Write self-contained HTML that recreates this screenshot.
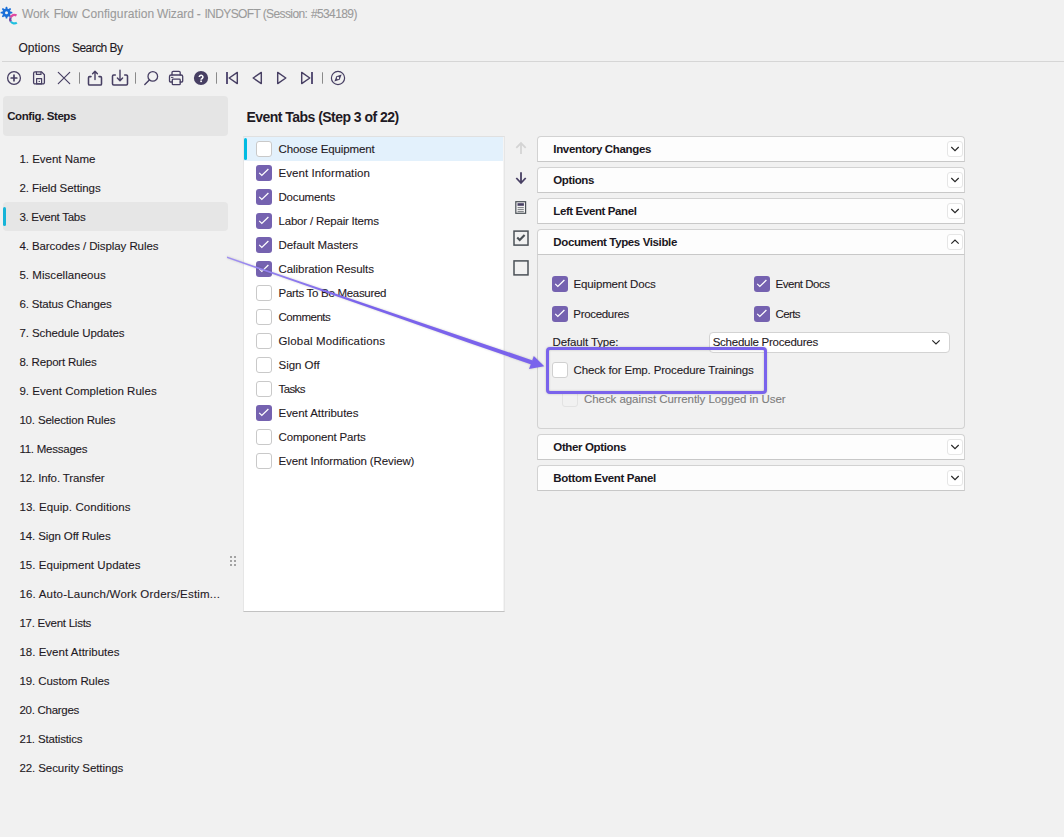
<!DOCTYPE html>
<html><head><meta charset="utf-8"><style>
html,body{margin:0;padding:0;}
body{width:1064px;height:837px;overflow:hidden;background:#f1f1f1;position:relative;font-family:"Liberation Sans", sans-serif;}
.t{position:absolute;white-space:nowrap;}
</style></head><body>
<svg style="position:absolute;left:0;top:5px" width="20" height="20" viewBox="0 0 20 20">
<g fill="#1a6fd8">
<circle cx="6.5" cy="7.7" r="4.2"/>
<rect x="5.6" y="1.8" width="1.8" height="11.8" rx="0.6"/>
<rect x="0.6" y="6.8" width="11.8" height="1.8" rx="0.6"/>
<rect x="5.6" y="1.8" width="1.8" height="11.8" rx="0.6" transform="rotate(45 6.5 7.7)"/>
<rect x="5.6" y="1.8" width="1.8" height="11.8" rx="0.6" transform="rotate(-45 6.5 7.7)"/>
</g>
<circle cx="6.5" cy="7.7" r="1.5" fill="#f1f1f1"/>
<path d="M16.5 10.5 A4 4 0 0 0 10.6 12.5" stroke="#e04aa0" stroke-width="2.3" fill="none"/>
<path d="M10.6 12.5 A4 4 0 0 0 10.9 16.5" stroke="#6a4aa8" stroke-width="2.3" fill="none"/>
<path d="M10.9 16.5 A4 4 0 0 0 16.8 17.6" stroke="#1fc0e0" stroke-width="2.3" fill="none"/>
</svg>
<div class="t" style="left:22.00px;top:5.84px;font-size:12px;line-height:16px;-webkit-text-stroke:0.1px currentColor;color:#9b9b9b;letter-spacing:-0.193px;">Work</div>
<div class="t" style="left:53.80px;top:5.84px;font-size:12px;line-height:16px;-webkit-text-stroke:0.1px currentColor;color:#9b9b9b;letter-spacing:-0.457px;">Flow</div>
<div class="t" style="left:81.70px;top:5.84px;font-size:12px;line-height:16px;-webkit-text-stroke:0.1px currentColor;color:#9b9b9b;letter-spacing:0.083px;">Configuration</div>
<div class="t" style="left:157.00px;top:5.84px;font-size:12px;line-height:16px;-webkit-text-stroke:0.1px currentColor;color:#9b9b9b;letter-spacing:-0.092px;">Wizard</div>
<div class="t" style="left:196.80px;top:5.84px;font-size:12px;line-height:16px;-webkit-text-stroke:0.1px currentColor;color:#9b9b9b;letter-spacing:-0.300px;">-</div>
<div class="t" style="left:204.40px;top:5.84px;font-size:12px;line-height:16px;-webkit-text-stroke:0.1px currentColor;color:#9b9b9b;letter-spacing:-0.600px;">INDYSOFT</div>
<div class="t" style="left:262.70px;top:5.84px;font-size:12px;line-height:16px;-webkit-text-stroke:0.1px currentColor;color:#9b9b9b;letter-spacing:-0.600px;">(Session:</div>
<div class="t" style="left:310.90px;top:5.84px;font-size:12px;line-height:16px;-webkit-text-stroke:0.1px currentColor;color:#9b9b9b;letter-spacing:-0.600px;">#534189)</div>
<div class="t" style="left:18.40px;top:39.54px;font-size:12px;line-height:16px;-webkit-text-stroke:0.1px currentColor;color:#1f1a24;letter-spacing:0.024px;">Options</div>
<div class="t" style="left:72.00px;top:39.54px;font-size:12px;line-height:16px;-webkit-text-stroke:0.1px currentColor;color:#1f1a24;letter-spacing:-0.545px;">Search By</div>
<div style="position:absolute;left:2px;top:61px;width:1062px;height:1px;background:#d6d6d6"></div>
<svg style="position:absolute;left:0;top:64px" width="360" height="28" viewBox="0 64 360 28" fill="none" stroke="#473f63" stroke-width="1.3" stroke-linecap="round" stroke-linejoin="round">
<circle cx="14" cy="78" r="6.4"/>
<path d="M14 75.2V80.8M11.2 78H16.8" stroke-width="1.7"/>
<path d="M35 71.9H41.6L44.4 74.7V82.6A1.3 1.3 0 0 1 43.1 83.9H34.9A1.3 1.3 0 0 1 33.6 82.6V73.3A1.4 1.4 0 0 1 35 71.9Z"/>
<path d="M36.4 72V74.4H41V72" stroke-width="1.2"/>
<rect x="36.6" y="78.6" width="5" height="5.3" stroke-width="1.2"/>
<path d="M39 81.4H39.6" stroke-width="1"/>
<path d="M58.3 72.4L69.7 83.6M69.7 72.4L58.3 83.6" stroke-width="1.2"/>
<path d="M79.5 72.3V83.7M135.5 72.3V83.7M216.5 72.3V83.7M322.5 72.3V83.7" stroke="#8a8a8a" stroke-width="1" stroke-linecap="butt"/>
<path d="M91 76.6H89.6A1.1 1.1 0 0 0 88.5 77.7V83.9A1.1 1.1 0 0 0 89.6 85H100.4A1.1 1.1 0 0 0 101.5 83.9V77.7A1.1 1.1 0 0 0 100.4 76.6H99" stroke-width="1.55"/>
<path d="M95 79.6V71.5M92.6 73.8L95 71.2L97.4 73.8" stroke-width="1.4"/>
<path d="M115.3 75H113.7A1.2 1.2 0 0 0 112.5 76.2V83.8A1.2 1.2 0 0 0 113.7 85H126.3A1.2 1.2 0 0 0 127.5 83.8V76.2A1.2 1.2 0 0 0 126.3 75H124.7" stroke-width="1.55"/>
<path d="M120 70.3V80.6M117.4 78L120 80.7L122.6 78" stroke-width="1.4"/>
<circle cx="152.8" cy="76.4" r="4.8"/>
<path d="M149.3 79.9L144.8 84.4" stroke-width="1.4"/>
<path d="M172 75V72.6A1.2 1.2 0 0 1 173.2 71.4H179A1.2 1.2 0 0 1 180.2 72.6V75"/>
<path d="M172 82H170.4A0.9 0.9 0 0 1 169.5 81.1V76.6A1.6 1.6 0 0 1 171.1 75H181.1A1.6 1.6 0 0 1 182.7 76.6V81.1A0.9 0.9 0 0 1 181.8 82H180.2"/>
<rect x="172.3" y="79.2" width="7.9" height="5.5" rx="0.8"/>
<path d="M171.4 77.4H173" stroke-width="1"/>
<path d="M227 72V84" stroke-width="2" stroke-linecap="butt" stroke="#5a5278"/>
<path d="M237.3 72.4V83.6L229.2 78Z" stroke-width="1.45"/>
<path d="M261.3 72.4V83.6L253.2 78Z" stroke-width="1.45"/>
<path d="M277.7 72.4V83.6L285.8 78Z" stroke-width="1.45"/>
<path d="M301.7 72.4V83.6L309.8 78Z" stroke-width="1.45"/>
<path d="M312 72V84" stroke-width="2" stroke-linecap="butt" stroke="#5a5278"/>
<circle cx="338" cy="78" r="6.6" stroke-width="1.2"/>
</svg>
<svg style="position:absolute;left:193px;top:70px" width="16" height="16" viewBox="0 0 16 16">
<circle cx="8" cy="8" r="7.1" fill="#473f63"/>
<path d="M6.3 7.1A1.8 1.8 0 1 1 9.4 8.3C8.6 8.8 8.1 9 8.1 9.8" stroke="#fff" stroke-width="1.6" fill="none" stroke-linecap="butt"/>
<rect x="7.25" y="10.5" width="1.7" height="1.6" fill="#fff"/>
</svg>
<svg style="position:absolute;left:330px;top:70px" width="16" height="16" viewBox="0 0 16 16">
<path d="M11.6 4.4L9.7 9.7L4.4 11.6L6.3 6.3Z" fill="#473f63"/>
<circle cx="8" cy="8" r="1.2" fill="#f1f1f1"/>
</svg>
<div style="position:absolute;left:3px;top:96px;width:225px;height:40px;background:#e5e5e5;border-radius:4px"></div>
<div class="t" style="left:7.20px;top:108.32px;font-size:11.5px;line-height:16px;font-weight:bold;color:#1f1a24;letter-spacing:-0.410px;">Config. Steps</div>
<div style="position:absolute;left:3px;top:202px;width:225px;height:29px;background:#e6e6e6;border-radius:4px"></div>
<div style="position:absolute;left:3px;top:207px;width:3px;height:19px;background:#17b4d8;border-radius:2px"></div>
<div class="t" style="left:19.40px;top:151.02px;font-size:11.5px;line-height:16px;-webkit-text-stroke:0.1px currentColor;color:#1f1a24;letter-spacing:-0.006px;">1. Event Name</div>
<div class="t" style="left:19.40px;top:180.02px;font-size:11.5px;line-height:16px;-webkit-text-stroke:0.1px currentColor;color:#1f1a24;letter-spacing:-0.076px;">2. Field Settings</div>
<div class="t" style="left:19.40px;top:209.02px;font-size:11.5px;line-height:16px;-webkit-text-stroke:0.1px currentColor;color:#1f1a24;letter-spacing:-0.269px;">3. Event Tabs</div>
<div class="t" style="left:19.40px;top:238.02px;font-size:11.5px;line-height:16px;-webkit-text-stroke:0.1px currentColor;color:#1f1a24;letter-spacing:-0.085px;">4. Barcodes / Display Rules</div>
<div class="t" style="left:19.40px;top:267.02px;font-size:11.5px;line-height:16px;-webkit-text-stroke:0.1px currentColor;color:#1f1a24;letter-spacing:0.046px;">5. Miscellaneous</div>
<div class="t" style="left:19.40px;top:296.02px;font-size:11.5px;line-height:16px;-webkit-text-stroke:0.1px currentColor;color:#1f1a24;letter-spacing:-0.148px;">6. Status Changes</div>
<div class="t" style="left:19.40px;top:325.02px;font-size:11.5px;line-height:16px;-webkit-text-stroke:0.1px currentColor;color:#1f1a24;letter-spacing:-0.090px;">7. Schedule Updates</div>
<div class="t" style="left:19.40px;top:354.02px;font-size:11.5px;line-height:16px;-webkit-text-stroke:0.1px currentColor;color:#1f1a24;letter-spacing:-0.189px;">8. Report Rules</div>
<div class="t" style="left:19.40px;top:383.02px;font-size:11.5px;line-height:16px;-webkit-text-stroke:0.1px currentColor;color:#1f1a24;letter-spacing:0.046px;">9. Event Completion Rules</div>
<div class="t" style="left:19.40px;top:412.02px;font-size:11.5px;line-height:16px;-webkit-text-stroke:0.1px currentColor;color:#1f1a24;letter-spacing:-0.169px;">10. Selection Rules</div>
<div class="t" style="left:19.40px;top:441.02px;font-size:11.5px;line-height:16px;-webkit-text-stroke:0.1px currentColor;color:#1f1a24;letter-spacing:-0.245px;">11. Messages</div>
<div class="t" style="left:19.40px;top:470.02px;font-size:11.5px;line-height:16px;-webkit-text-stroke:0.1px currentColor;color:#1f1a24;letter-spacing:-0.107px;">12. Info. Transfer</div>
<div class="t" style="left:19.40px;top:499.02px;font-size:11.5px;line-height:16px;-webkit-text-stroke:0.1px currentColor;color:#1f1a24;letter-spacing:0.091px;">13. Equip. Conditions</div>
<div class="t" style="left:19.40px;top:528.02px;font-size:11.5px;line-height:16px;-webkit-text-stroke:0.1px currentColor;color:#1f1a24;letter-spacing:-0.110px;">14. Sign Off Rules</div>
<div class="t" style="left:19.40px;top:557.02px;font-size:11.5px;line-height:16px;-webkit-text-stroke:0.1px currentColor;color:#1f1a24;letter-spacing:0.043px;">15. Equipment Updates</div>
<div class="t" style="left:19.40px;top:586.02px;font-size:11.5px;line-height:16px;-webkit-text-stroke:0.1px currentColor;color:#1f1a24;letter-spacing:0.200px;">16. Auto-Launch/Work Orders/Estim...</div>
<div class="t" style="left:19.40px;top:615.02px;font-size:11.5px;line-height:16px;-webkit-text-stroke:0.1px currentColor;color:#1f1a24;letter-spacing:-0.249px;">17. Event Lists</div>
<div class="t" style="left:19.40px;top:644.02px;font-size:11.5px;line-height:16px;-webkit-text-stroke:0.1px currentColor;color:#1f1a24;letter-spacing:0.020px;">18. Event Attributes</div>
<div class="t" style="left:19.40px;top:673.02px;font-size:11.5px;line-height:16px;-webkit-text-stroke:0.1px currentColor;color:#1f1a24;letter-spacing:-0.090px;">19. Custom Rules</div>
<div class="t" style="left:19.40px;top:702.02px;font-size:11.5px;line-height:16px;-webkit-text-stroke:0.1px currentColor;color:#1f1a24;letter-spacing:-0.270px;">20. Charges</div>
<div class="t" style="left:19.40px;top:731.02px;font-size:11.5px;line-height:16px;-webkit-text-stroke:0.1px currentColor;color:#1f1a24;letter-spacing:-0.157px;">21. Statistics</div>
<div class="t" style="left:19.40px;top:760.02px;font-size:11.5px;line-height:16px;-webkit-text-stroke:0.1px currentColor;color:#1f1a24;letter-spacing:-0.076px;">22. Security Settings</div>
<div style="position:absolute;left:230px;top:556px;width:2px;height:2px;background:#a3a3a3"></div>
<div style="position:absolute;left:230px;top:560px;width:2px;height:2px;background:#a3a3a3"></div>
<div style="position:absolute;left:230px;top:564px;width:2px;height:2px;background:#a3a3a3"></div>
<div style="position:absolute;left:234px;top:556px;width:2px;height:2px;background:#a3a3a3"></div>
<div style="position:absolute;left:234px;top:560px;width:2px;height:2px;background:#a3a3a3"></div>
<div style="position:absolute;left:234px;top:564px;width:2px;height:2px;background:#a3a3a3"></div>
<div class="t" style="left:246.50px;top:108.15px;font-size:14px;line-height:18px;font-weight:bold;color:#1f1a24;letter-spacing:-0.537px;">Event Tabs (Step 3 of 22)</div>
<div style="position:absolute;left:243px;top:136px;width:260px;height:474px;background:#fff;border:1px solid #e6e6e6;border-bottom-color:#c2c2c2;border-top-color:#e0e0e0;box-shadow:inset -1px 0 0 #f4f4f4"></div>
<div style="position:absolute;left:244px;top:137px;width:259px;height:24px;background:#e3f1fc"></div>
<div style="position:absolute;left:244px;top:138px;width:3px;height:22px;background:#00bbe2;border-radius:1.5px"></div>
<div style="position:absolute;left:256px;top:141px;width:14px;height:14px;border:1px solid #c9c9c9;border-radius:3px;background:#fff"></div>
<div class="t" style="left:278.50px;top:141.02px;font-size:11.5px;line-height:16px;-webkit-text-stroke:0.1px currentColor;color:#1f1a24;letter-spacing:-0.101px;">Choose Equipment</div>
<svg style="position:absolute;left:256px;top:165px" width="16" height="16" viewBox="0 0 16 16"><rect x="0" y="0" width="16" height="16" rx="3" fill="#7562b0"/><path d="M3.2 7.9L5.8 10.4L12.4 4" stroke="#fff" stroke-width="1.25" fill="none"/></svg>
<div class="t" style="left:278.50px;top:165.02px;font-size:11.5px;line-height:16px;-webkit-text-stroke:0.1px currentColor;color:#1f1a24;letter-spacing:0.079px;">Event Information</div>
<svg style="position:absolute;left:256px;top:189px" width="16" height="16" viewBox="0 0 16 16"><rect x="0" y="0" width="16" height="16" rx="3" fill="#7562b0"/><path d="M3.2 7.9L5.8 10.4L12.4 4" stroke="#fff" stroke-width="1.25" fill="none"/></svg>
<div class="t" style="left:278.50px;top:189.02px;font-size:11.5px;line-height:16px;-webkit-text-stroke:0.1px currentColor;color:#1f1a24;letter-spacing:-0.189px;">Documents</div>
<svg style="position:absolute;left:256px;top:213px" width="16" height="16" viewBox="0 0 16 16"><rect x="0" y="0" width="16" height="16" rx="3" fill="#7562b0"/><path d="M3.2 7.9L5.8 10.4L12.4 4" stroke="#fff" stroke-width="1.25" fill="none"/></svg>
<div class="t" style="left:278.50px;top:213.02px;font-size:11.5px;line-height:16px;-webkit-text-stroke:0.1px currentColor;color:#1f1a24;letter-spacing:-0.197px;">Labor / Repair Items</div>
<svg style="position:absolute;left:256px;top:237px" width="16" height="16" viewBox="0 0 16 16"><rect x="0" y="0" width="16" height="16" rx="3" fill="#7562b0"/><path d="M3.2 7.9L5.8 10.4L12.4 4" stroke="#fff" stroke-width="1.25" fill="none"/></svg>
<div class="t" style="left:278.50px;top:237.02px;font-size:11.5px;line-height:16px;-webkit-text-stroke:0.1px currentColor;color:#1f1a24;letter-spacing:-0.070px;">Default Masters</div>
<svg style="position:absolute;left:256px;top:261px" width="16" height="16" viewBox="0 0 16 16"><rect x="0" y="0" width="16" height="16" rx="3" fill="#7562b0"/><path d="M3.2 7.9L5.8 10.4L12.4 4" stroke="#fff" stroke-width="1.25" fill="none"/></svg>
<div class="t" style="left:278.50px;top:261.02px;font-size:11.5px;line-height:16px;-webkit-text-stroke:0.1px currentColor;color:#1f1a24;letter-spacing:-0.059px;">Calibration Results</div>
<div style="position:absolute;left:256px;top:285px;width:14px;height:14px;border:1px solid #c9c9c9;border-radius:3px;background:#fff"></div>
<div class="t" style="left:278.50px;top:285.02px;font-size:11.5px;line-height:16px;-webkit-text-stroke:0.1px currentColor;color:#1f1a24;letter-spacing:-0.294px;">Parts To Be Measured</div>
<div style="position:absolute;left:256px;top:309px;width:14px;height:14px;border:1px solid #c9c9c9;border-radius:3px;background:#fff"></div>
<div class="t" style="left:278.50px;top:309.02px;font-size:11.5px;line-height:16px;-webkit-text-stroke:0.1px currentColor;color:#1f1a24;letter-spacing:-0.464px;">Comments</div>
<div style="position:absolute;left:256px;top:333px;width:14px;height:14px;border:1px solid #c9c9c9;border-radius:3px;background:#fff"></div>
<div class="t" style="left:278.50px;top:333.02px;font-size:11.5px;line-height:16px;-webkit-text-stroke:0.1px currentColor;color:#1f1a24;letter-spacing:0.158px;">Global Modifications</div>
<div style="position:absolute;left:256px;top:357px;width:14px;height:14px;border:1px solid #c9c9c9;border-radius:3px;background:#fff"></div>
<div class="t" style="left:278.50px;top:357.02px;font-size:11.5px;line-height:16px;-webkit-text-stroke:0.1px currentColor;color:#1f1a24;letter-spacing:-0.035px;">Sign Off</div>
<div style="position:absolute;left:256px;top:381px;width:14px;height:14px;border:1px solid #c9c9c9;border-radius:3px;background:#fff"></div>
<div class="t" style="left:278.50px;top:381.02px;font-size:11.5px;line-height:16px;-webkit-text-stroke:0.1px currentColor;color:#1f1a24;letter-spacing:-0.600px;">Tasks</div>
<svg style="position:absolute;left:256px;top:405px" width="16" height="16" viewBox="0 0 16 16"><rect x="0" y="0" width="16" height="16" rx="3" fill="#7562b0"/><path d="M3.2 7.9L5.8 10.4L12.4 4" stroke="#fff" stroke-width="1.25" fill="none"/></svg>
<div class="t" style="left:278.50px;top:405.02px;font-size:11.5px;line-height:16px;-webkit-text-stroke:0.1px currentColor;color:#1f1a24;letter-spacing:-0.042px;">Event Attributes</div>
<div style="position:absolute;left:256px;top:429px;width:14px;height:14px;border:1px solid #c9c9c9;border-radius:3px;background:#fff"></div>
<div class="t" style="left:278.50px;top:429.02px;font-size:11.5px;line-height:16px;-webkit-text-stroke:0.1px currentColor;color:#1f1a24;letter-spacing:-0.160px;">Component Parts</div>
<div style="position:absolute;left:256px;top:453px;width:14px;height:14px;border:1px solid #c9c9c9;border-radius:3px;background:#fff"></div>
<div class="t" style="left:278.50px;top:453.02px;font-size:11.5px;line-height:16px;-webkit-text-stroke:0.1px currentColor;color:#1f1a24;letter-spacing:-0.110px;">Event Information (Review)</div>
<svg style="position:absolute;left:510px;top:138px" width="24" height="142" viewBox="510 138 24 142" fill="none" stroke-linecap="butt">
<path d="M521 154V143M516.3 147.8L521 143L525.7 147.8" stroke="#d4d4d4" stroke-width="1.8"/>
<path d="M521 172.3V183M516.3 178L521 183L525.7 178" stroke="#473f63" stroke-width="1.8"/>
<rect x="515.8" y="201.7" width="9.8" height="11.6" stroke="#4b5157" stroke-width="1.2"/>
<rect x="517.5" y="203.2" width="6.4" height="2.6" fill="#473f63"/>
<path d="M517.6 207.6H523.8M517.6 209.6H523.8M517.6 211.6H523.8" stroke="#6c7074" stroke-width="0.9"/>
<rect x="514" y="231.1" width="14" height="14" stroke="#4b5157" stroke-width="1.5"/>
<path d="M517.2 237.6L519.7 240.1L524.6 235" stroke="#4b5157" stroke-width="2.1"/>
<rect x="514" y="260.9" width="14" height="14" stroke="#4b5157" stroke-width="1.5"/>
</svg>
<div style="position:absolute;left:537px;top:136px;width:426px;height:24px;background:#fdfdfd;border:1px solid #d2d2d2;border-bottom-color:#c8c8c8;border-radius:4px 4px 0 0"></div>
<div class="t" style="left:553.30px;top:140.82px;font-size:11.5px;line-height:16px;font-weight:bold;color:#1b1722;letter-spacing:-0.339px;">Inventory Changes</div>
<div style="position:absolute;left:947px;top:141px;width:14px;height:14px;border:1px solid #e6e6e6;border-radius:3px;background:#fff"></div>
<svg style="position:absolute;left:945px;top:136px" width="20" height="25" viewBox="945 136 20 25"><path d="M951.3 147L955 150.7L958.7 147" stroke="#262626" stroke-width="1.15" fill="none"/></svg>
<div style="position:absolute;left:537px;top:167px;width:426px;height:24px;background:#fdfdfd;border:1px solid #d2d2d2;border-bottom-color:#c8c8c8;border-radius:4px 4px 0 0"></div>
<div class="t" style="left:553.30px;top:171.82px;font-size:11.5px;line-height:16px;font-weight:bold;color:#1b1722;letter-spacing:-0.407px;">Options</div>
<div style="position:absolute;left:947px;top:172px;width:14px;height:14px;border:1px solid #e6e6e6;border-radius:3px;background:#fff"></div>
<svg style="position:absolute;left:945px;top:167px" width="20" height="25" viewBox="945 167 20 25"><path d="M951.3 178L955 181.7L958.7 178" stroke="#262626" stroke-width="1.15" fill="none"/></svg>
<div style="position:absolute;left:537px;top:198px;width:426px;height:24px;background:#fdfdfd;border:1px solid #d2d2d2;border-bottom-color:#c8c8c8;border-radius:4px 4px 0 0"></div>
<div class="t" style="left:553.30px;top:202.82px;font-size:11.5px;line-height:16px;font-weight:bold;color:#1b1722;letter-spacing:-0.391px;">Left Event Panel</div>
<div style="position:absolute;left:947px;top:203px;width:14px;height:14px;border:1px solid #e6e6e6;border-radius:3px;background:#fff"></div>
<svg style="position:absolute;left:945px;top:198px" width="20" height="25" viewBox="945 198 20 25"><path d="M951.3 209L955 212.7L958.7 209" stroke="#262626" stroke-width="1.15" fill="none"/></svg>
<div style="position:absolute;left:537px;top:255px;width:426px;height:173px;background:#f1f1f1;border:1px solid #d2d2d2;border-top:none;border-radius:0 0 4px 4px"></div>
<div style="position:absolute;left:537px;top:229px;width:426px;height:24px;background:#fdfdfd;border:1px solid #d2d2d2;border-bottom-color:#c8c8c8;border-radius:4px 4px 0 0"></div>
<div class="t" style="left:553.30px;top:233.82px;font-size:11.5px;line-height:16px;font-weight:bold;color:#1b1722;letter-spacing:-0.375px;">Document Types Visible</div>
<div style="position:absolute;left:947px;top:234px;width:14px;height:14px;border:1px solid #e6e6e6;border-radius:3px;background:#fff"></div>
<svg style="position:absolute;left:945px;top:229px" width="20" height="25" viewBox="945 229 20 25"><path d="M951.3 243.7L955 240L958.7 243.7" stroke="#262626" stroke-width="1.15" fill="none"/></svg>
<div style="position:absolute;left:537px;top:434px;width:426px;height:24px;background:#fdfdfd;border:1px solid #d2d2d2;border-bottom-color:#c8c8c8;border-radius:4px 4px 0 0"></div>
<div class="t" style="left:553.30px;top:438.82px;font-size:11.5px;line-height:16px;font-weight:bold;color:#1b1722;letter-spacing:-0.359px;">Other Options</div>
<div style="position:absolute;left:947px;top:439px;width:14px;height:14px;border:1px solid #e6e6e6;border-radius:3px;background:#fff"></div>
<svg style="position:absolute;left:945px;top:434px" width="20" height="25" viewBox="945 434 20 25"><path d="M951.3 445L955 448.7L958.7 445" stroke="#262626" stroke-width="1.15" fill="none"/></svg>
<div style="position:absolute;left:537px;top:465px;width:426px;height:24px;background:#fdfdfd;border:1px solid #d2d2d2;border-bottom-color:#c8c8c8;border-radius:4px 4px 0 0"></div>
<div class="t" style="left:553.30px;top:469.82px;font-size:11.5px;line-height:16px;font-weight:bold;color:#1b1722;letter-spacing:-0.337px;">Bottom Event Panel</div>
<div style="position:absolute;left:947px;top:470px;width:14px;height:14px;border:1px solid #e6e6e6;border-radius:3px;background:#fff"></div>
<svg style="position:absolute;left:945px;top:465px" width="20" height="25" viewBox="945 465 20 25"><path d="M951.3 476L955 479.7L958.7 476" stroke="#262626" stroke-width="1.15" fill="none"/></svg>
<svg style="position:absolute;left:552px;top:276px" width="16" height="16" viewBox="0 0 16 16"><rect x="0" y="0" width="16" height="16" rx="3" fill="#7562b0"/><path d="M3.2 7.9L5.8 10.4L12.4 4" stroke="#fff" stroke-width="1.25" fill="none"/></svg>
<div class="t" style="left:573.60px;top:276.02px;font-size:11.5px;line-height:16px;-webkit-text-stroke:0.1px currentColor;color:#1f1a24;letter-spacing:-0.171px;">Equipment Docs</div>
<svg style="position:absolute;left:754px;top:276px" width="16" height="16" viewBox="0 0 16 16"><rect x="0" y="0" width="16" height="16" rx="3" fill="#7562b0"/><path d="M3.2 7.9L5.8 10.4L12.4 4" stroke="#fff" stroke-width="1.25" fill="none"/></svg>
<div class="t" style="left:775.50px;top:276.02px;font-size:11.5px;line-height:16px;-webkit-text-stroke:0.1px currentColor;color:#1f1a24;letter-spacing:-0.473px;">Event Docs</div>
<svg style="position:absolute;left:552px;top:306px" width="16" height="16" viewBox="0 0 16 16"><rect x="0" y="0" width="16" height="16" rx="3" fill="#7562b0"/><path d="M3.2 7.9L5.8 10.4L12.4 4" stroke="#fff" stroke-width="1.25" fill="none"/></svg>
<div class="t" style="left:573.30px;top:306.02px;font-size:11.5px;line-height:16px;-webkit-text-stroke:0.1px currentColor;color:#1f1a24;letter-spacing:-0.318px;">Procedures</div>
<svg style="position:absolute;left:754px;top:306px" width="16" height="16" viewBox="0 0 16 16"><rect x="0" y="0" width="16" height="16" rx="3" fill="#7562b0"/><path d="M3.2 7.9L5.8 10.4L12.4 4" stroke="#fff" stroke-width="1.25" fill="none"/></svg>
<div class="t" style="left:775.50px;top:306.02px;font-size:11.5px;line-height:16px;-webkit-text-stroke:0.1px currentColor;color:#1f1a24;letter-spacing:-0.600px;">Certs</div>
<div class="t" style="left:552.50px;top:334.22px;font-size:11.5px;line-height:16px;-webkit-text-stroke:0.1px currentColor;color:#1f1a24;letter-spacing:-0.130px;">Default Type:</div>
<div style="position:absolute;left:709px;top:332px;width:239px;height:19px;background:#fff;border:1px solid #d3d3d3;border-radius:4px"></div>
<div class="t" style="left:712.70px;top:334.22px;font-size:11.5px;line-height:16px;-webkit-text-stroke:0.1px currentColor;color:#1f1a24;letter-spacing:-0.250px;">Schedule Procedures</div>
<svg style="position:absolute;left:928px;top:336px" width="16" height="12" viewBox="928 336 16 12"><path d="M932.3 340.4L936 344L939.7 340.4" stroke="#262626" stroke-width="1.15" fill="none"/></svg>
<div style="position:absolute;left:552px;top:362px;width:14px;height:14px;border:1px solid #d0d0d0;border-radius:3px;background:#fff"></div>
<div class="t" style="left:573.50px;top:362.22px;font-size:11.5px;line-height:16px;-webkit-text-stroke:0.1px currentColor;color:#1f1a24;letter-spacing:-0.152px;">Check for Emp. Procedure Trainings</div>
<div style="position:absolute;left:562px;top:391px;width:14px;height:14px;border:1px solid #e2e2e2;border-radius:3px;background:#f1f1f1"></div>
<div class="t" style="left:584.00px;top:391.02px;font-size:11.5px;line-height:16px;-webkit-text-stroke:0.1px currentColor;color:#7d7d7d;letter-spacing:-0.064px;">Check against Currently Logged in User</div>
<svg style="position:absolute;left:0;top:0;filter:drop-shadow(0 0 1.2px rgba(0,0,0,0.18))" width="1064" height="837" viewBox="0 0 1064 837"><defs><linearGradient id="lg" gradientUnits="userSpaceOnUse" x1="227" y1="0" x2="360" y2="0"><stop offset="0" stop-color="#9f8ff0"/><stop offset="1" stop-color="#7a63ec"/></linearGradient></defs>
<rect x="547.5" y="348.5" width="218" height="44" rx="2.5" fill="none" stroke="#7a63ec" stroke-width="3"/>
<path d="M227.0 256.60L300.0 281.38L400.0 315.49L470.0 339.13L532.0 360.22L532.0 364.82L470.0 343.13L400.0 318.49L300.0 283.59L227.0 258.00Z" fill="url(#lg)"/>
<path d="M544.3 366.2L533.8 356.1L529 369Z" fill="#7a63ec"/>
</svg>
</body></html>
